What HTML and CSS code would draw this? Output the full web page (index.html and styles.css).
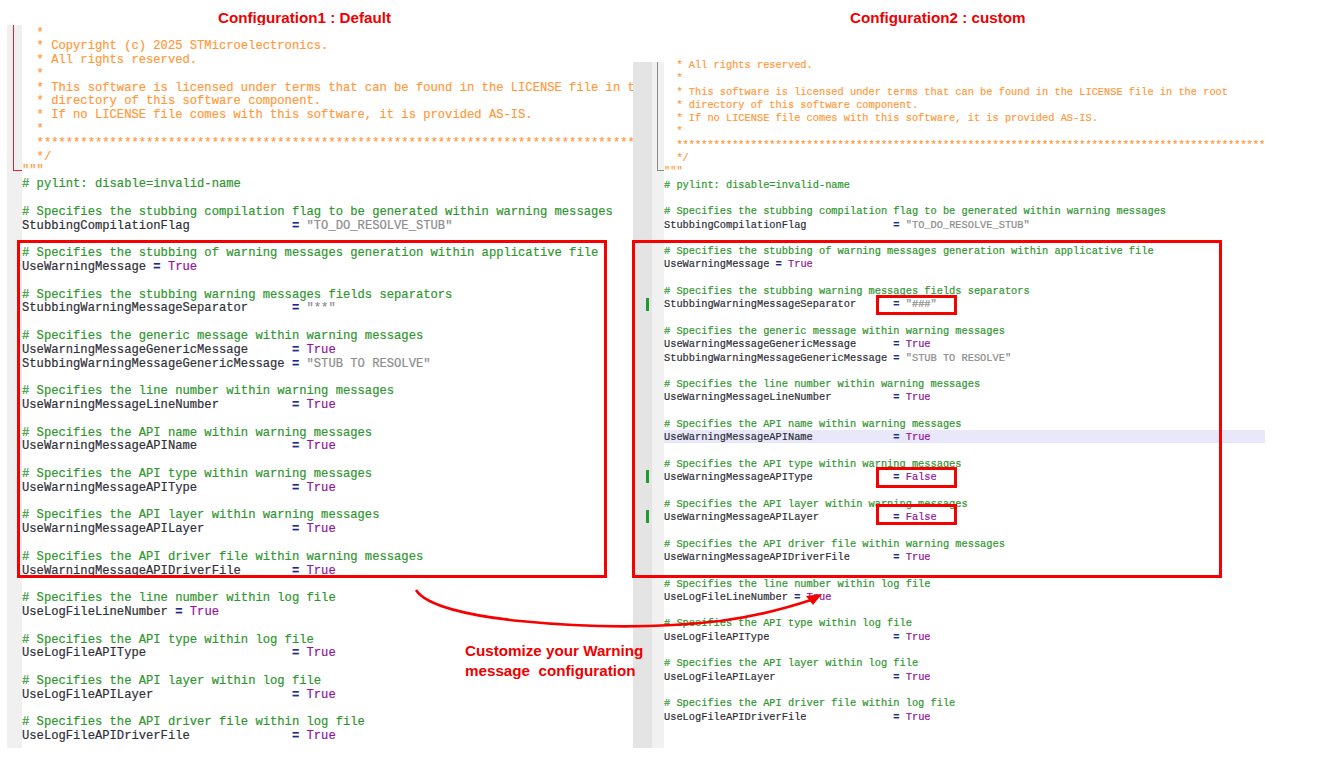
FILE: index.html
```html
<!DOCTYPE html>
<html lang="en">
<head>
<meta charset="utf-8">
<title>Warning message configuration</title>
<link rel="stylesheet" href="styles.css">
</head>
<body>
<main class="canvas">
<h2 class="title title-left">Configuration1 : Default</h2>
<h2 class="title title-right">Configuration2 : custom</h2>

<section class="panel panel-left">
<div class="gutter"></div>
<div class="fold"></div>
<pre class="code"><span class="d">  *
  * Copyright (c) 2025 STMicroelectronics.
  * All rights reserved.
  *
  * This software is licensed under terms that can be found in the LICENSE file in the root
  * directory of this software component.
  * If no LICENSE file comes with this software, it is provided AS-IS.
  *
  ***********************************************************************************************
  */
"""</span>
<span class="c"># pylint: disable=invalid-name</span>

<span class="c"># Specifies the stubbing compilation flag to be generated within warning messages</span>
<span class="n">StubbingCompilationFlag</span>              <span class="o">=</span> <span class="s">"TO_DO_RESOLVE_STUB"</span>

<span class="c"># Specifies the stubbing of warning messages generation within applicative file</span>
<span class="n">UseWarningMessage</span> <span class="o">=</span> <span class="k">True</span>

<span class="c"># Specifies the stubbing warning messages fields separators</span>
<span class="n">StubbingWarningMessageSeparator</span>      <span class="o">=</span> <span class="s">"**"</span>

<span class="c"># Specifies the generic message within warning messages</span>
<span class="n">UseWarningMessageGenericMessage</span>      <span class="o">=</span> <span class="k">True</span>
<span class="n">StubbingWarningMessageGenericMessage</span> <span class="o">=</span> <span class="s">"STUB TO RESOLVE"</span>

<span class="c"># Specifies the line number within warning messages</span>
<span class="n">UseWarningMessageLineNumber</span>          <span class="o">=</span> <span class="k">True</span>

<span class="c"># Specifies the API name within warning messages</span>
<span class="n">UseWarningMessageAPIName</span>             <span class="o">=</span> <span class="k">True</span>

<span class="c"># Specifies the API type within warning messages</span>
<span class="n">UseWarningMessageAPIType</span>             <span class="o">=</span> <span class="k">True</span>

<span class="c"># Specifies the API layer within warning messages</span>
<span class="n">UseWarningMessageAPILayer</span>            <span class="o">=</span> <span class="k">True</span>

<span class="c"># Specifies the API driver file within warning messages</span>
<span class="n">UseWarningMessageAPIDriverFile</span>       <span class="o">=</span> <span class="k">True</span>

<span class="c"># Specifies the line number within log file</span>
<span class="n">UseLogFileLineNumber</span> <span class="o">=</span> <span class="k">True</span>

<span class="c"># Specifies the API type within log file</span>
<span class="n">UseLogFileAPIType</span>                    <span class="o">=</span> <span class="k">True</span>

<span class="c"># Specifies the API layer within log file</span>
<span class="n">UseLogFileAPILayer</span>                   <span class="o">=</span> <span class="k">True</span>

<span class="c"># Specifies the API driver file within log file</span>
<span class="n">UseLogFileAPIDriverFile</span>              <span class="o">=</span> <span class="k">True</span></pre>
</section>

<section class="panel panel-right">
<div class="gutter"></div>
<div class="gutter-inner"></div>
<div class="fold"></div>
<div class="current-line"></div>
<i class="change change-sep"></i>
<i class="change change-type"></i>
<i class="change change-layer"></i>
<pre class="code"><span class="d">  * All rights reserved.
  *
  * This software is licensed under terms that can be found in the LICENSE file in the root
  * directory of this software component.
  * If no LICENSE file comes with this software, it is provided AS-IS.
  *
  ***********************************************************************************************
  */
"""</span>
<span class="c"># pylint: disable=invalid-name</span>

<span class="c"># Specifies the stubbing compilation flag to be generated within warning messages</span>
<span class="n">StubbingCompilationFlag</span>              <span class="o">=</span> <span class="s">"TO_DO_RESOLVE_STUB"</span>

<span class="c"># Specifies the stubbing of warning messages generation within applicative file</span>
<span class="n">UseWarningMessage</span> <span class="o">=</span> <span class="k">True</span>

<span class="c"># Specifies the stubbing warning messages fields separators</span>
<span class="n">StubbingWarningMessageSeparator</span>      <span class="o">=</span> <span class="s">"###"</span>

<span class="c"># Specifies the generic message within warning messages</span>
<span class="n">UseWarningMessageGenericMessage</span>      <span class="o">=</span> <span class="k">True</span>
<span class="n">StubbingWarningMessageGenericMessage</span> <span class="o">=</span> <span class="s">"STUB TO RESOLVE"</span>

<span class="c"># Specifies the line number within warning messages</span>
<span class="n">UseWarningMessageLineNumber</span>          <span class="o">=</span> <span class="k">True</span>

<span class="c"># Specifies the API name within warning messages</span>
<span class="n">UseWarningMessageAPIName</span>             <span class="o">=</span> <span class="k">True</span>

<span class="c"># Specifies the API type within warning messages</span>
<span class="n">UseWarningMessageAPIType</span>             <span class="o">=</span> <span class="k">False</span>

<span class="c"># Specifies the API layer within warning messages</span>
<span class="n">UseWarningMessageAPILayer</span>            <span class="o">=</span> <span class="k">False</span>

<span class="c"># Specifies the API driver file within warning messages</span>
<span class="n">UseWarningMessageAPIDriverFile</span>       <span class="o">=</span> <span class="k">True</span>

<span class="c"># Specifies the line number within log file</span>
<span class="n">UseLogFileLineNumber</span> <span class="o">=</span> <span class="k">True</span>

<span class="c"># Specifies the API type within log file</span>
<span class="n">UseLogFileAPIType</span>                    <span class="o">=</span> <span class="k">True</span>

<span class="c"># Specifies the API layer within log file</span>
<span class="n">UseLogFileAPILayer</span>                   <span class="o">=</span> <span class="k">True</span>

<span class="c"># Specifies the API driver file within log file</span>
<span class="n">UseLogFileAPIDriverFile</span>              <span class="o">=</span> <span class="k">True</span></pre>
</section>

<div class="box box-left"></div>
<div class="box box-right"></div>
<div class="box box-sep"></div>
<div class="box box-type"></div>
<div class="box box-layer"></div>

<svg class="arrow" width="1333" height="772" viewBox="0 0 1333 772" aria-hidden="true">
<path class="arrow-line" d="M416 590 C426 606 470 616 520 621 C590 628 660 628 720 621 C760 616 790 607 814 599"/>
<path class="arrow-head" d="M822 594 L806 596 L813 605 Z"/>
</svg>

<p class="note">Customize your Warning<br>message&nbsp; configuration</p>
</main>
</body>
</html>
```
FILE: styles.css
```css
html, body {
  margin: 0;
  padding: 0;
  background: #fff;
}

.canvas {
  position: relative;
  width: 1333px;
  height: 772px;
  overflow: hidden;
}

.title {
  position: absolute;
  top: 9px;
  margin: 0;
  font: bold 15.2px/18px "Liberation Sans", Arial, sans-serif;
  color: #f00000;
  white-space: nowrap;
}
.title-left { left: 218px; }
.title-right { left: 850px; }

.panel {
  position: absolute;
  background: #fff;
}
.panel-left {
  left: 7px;
  top: 25px;
  width: 626px;
  height: 723px;
  overflow: hidden;
}
.panel-right {
  left: 633px;
  top: 62px;
  width: 632px;
  height: 686px;
}

.gutter {
  position: absolute;
  left: 0;
  top: 0;
  bottom: 0;
  background: #f0f0f0;
}
.panel-left .gutter { width: 15px; }
.panel-right .gutter { width: 19px; background: #e4e4e4; }
.gutter-inner {
  position: absolute;
  left: 19px;
  top: 0;
  bottom: 0;
  width: 12px;
  background: #f1f1f1;
}

.fold {
  position: absolute;
  top: 0;
  border-left: 1px solid;
  border-bottom: 1px solid;
}
.panel-left .fold {
  left: 6px;
  width: 8px;
  height: 145px;
  border-color: #e8232a;
}
.panel-right .fold {
  left: 24px;
  width: 6px;
  height: 108px;
  border-color: #8a8a8a;
}

.current-line {
  position: absolute;
  left: 31px;
  right: 0;
  top: 368px;
  height: 13px;
  background: #e8e8fa;
}

.change {
  position: absolute;
  left: 13px;
  width: 3px;
  height: 13px;
  background: #1e9a2e;
}
.change-sep { top: 236px; }
.change-type { top: 408px; }
.change-layer { top: 448px; }

.code {
  position: relative;
  margin: 0;
  font-family: "Liberation Mono", "Courier New", monospace;
  white-space: pre;
  color: #333;
}
.panel-left .code {
  padding: 1.5px 0 0 15px;
  font-size: 12.16px;
  line-height: 13.8px;
  -webkit-text-stroke: 0.2px;
}
.panel-right .code {
  margin-top: -3px;
  padding-left: 31px;
  font-size: 10.33px;
  line-height: 13.29px;
  -webkit-text-stroke: 0.2px;
}

.d { color: #ff9a3c; }
.c { color: #2f962f; }
.n { color: #2f2f38; }
.o { color: #1c2a8c; font-weight: bold; }
.s { color: #8c8c8c; }
.k { color: #93149a; }

.box {
  position: absolute;
  box-sizing: border-box;
  border: 3px solid #f60000;
}
.box-left { left: 17px; top: 240px; width: 590px; height: 338px; }
.box-right { left: 632px; top: 240px; width: 590px; height: 338px; }
.box-sep { left: 876px; top: 295px; width: 81px; height: 20px; }
.box-type { left: 876px; top: 467px; width: 81px; height: 21px; }
.box-layer { left: 876px; top: 504px; width: 81px; height: 21px; }

.arrow {
  position: absolute;
  left: 0;
  top: 0;
  pointer-events: none;
}
.arrow-line {
  fill: none;
  stroke: #f60000;
  stroke-width: 2.6;
}
.arrow-head { fill: #f60000; }

.note {
  position: absolute;
  left: 465px;
  top: 641px;
  margin: 0;
  font: bold 15.2px/20px "Liberation Sans", Arial, sans-serif;
  color: #f00000;
  white-space: nowrap;
}
```
